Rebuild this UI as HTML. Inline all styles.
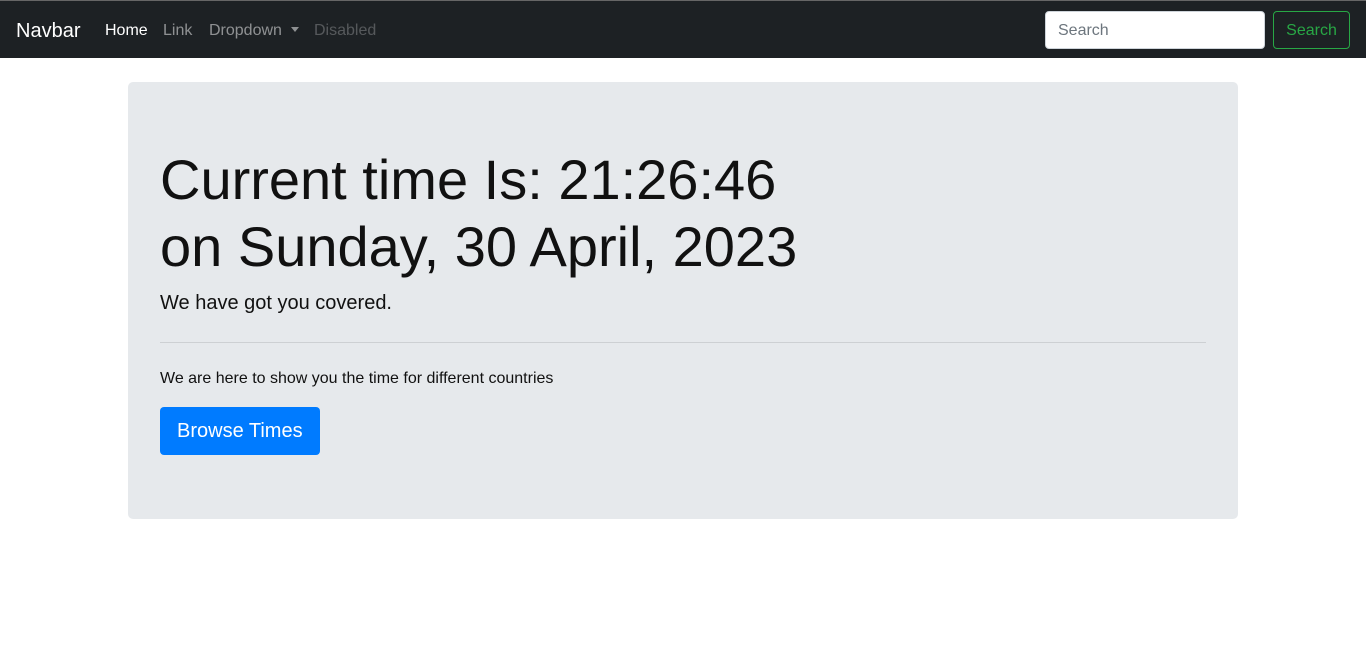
<!DOCTYPE html>
<html><head><meta charset="utf-8"><style>
*{box-sizing:border-box;margin:0;padding:0}
body{font-family:"Liberation Sans",sans-serif;background:#fff;color:#212529;width:1366px;height:658px;overflow:hidden}
.nav{height:58px;background:#1d2124;border-top:1px solid #666;position:relative}
.brand{position:absolute;left:16px;top:19px;font-size:20px;color:#fff}
.links span{position:absolute;top:21px;font-size:16px;color:rgba(255,255,255,.5)}
.links .a{color:#fff}
.links .d{color:rgba(255,255,255,.25)}
.caret{display:inline-block;border-top:5px solid rgba(255,255,255,.5);border-left:4px solid transparent;border-right:4px solid transparent;vertical-align:3px;margin-left:9px}
.search{position:absolute;left:1045px;top:10px;width:220px;height:38px;background:#fff;border-radius:4px;border:1px solid #ced4da;padding:0 12px;line-height:38px;color:#6c757d;font-size:16px}
.btn{position:absolute;left:1273px;top:10px;width:77px;height:38px;border:1px solid #28a745;border-radius:4px;color:#28a745;font-size:16px;line-height:38px;text-align:center}
.jumbo{position:absolute;left:128px;top:82px;width:1110px;height:437px;background:#e6e9ec;border-radius:5px;padding:0 32px}
h1{font-weight:400;font-size:56px;line-height:67px;color:#111;margin-top:64px}
.lead{font-size:20px;margin-top:12px;color:#111}
hr{border:0;border-top:1px solid #cdd0d3;margin:27px 0 27px}
p{font-size:16px;color:#111}
.b{display:inline-block;margin-top:19px;background:#007bff;color:#fff;font-size:20px;height:48px;line-height:48px;padding:0 17px;border-radius:4px}
</style></head><body>
<div class="nav">
<div class="brand">Navbar</div>
<div class="links"><span class="a" style="left:105px">Home</span><span style="left:163px">Link</span><span style="left:209px">Dropdown<i class="caret"></i></span><span class="d" style="left:314px">Disabled</span></div>
<div class="search">Search</div>
<div class="btn">Search</div>
</div>
<div class="jumbo">
<h1>Current time Is: 21:26:46<br>on Sunday, 30 April, 2023</h1>
<div class="lead">We have got you covered.</div>
<hr>
<p>We are here to show you the time for different countries</p>
<span class="b">Browse Times</span>
</div>
</body></html>
